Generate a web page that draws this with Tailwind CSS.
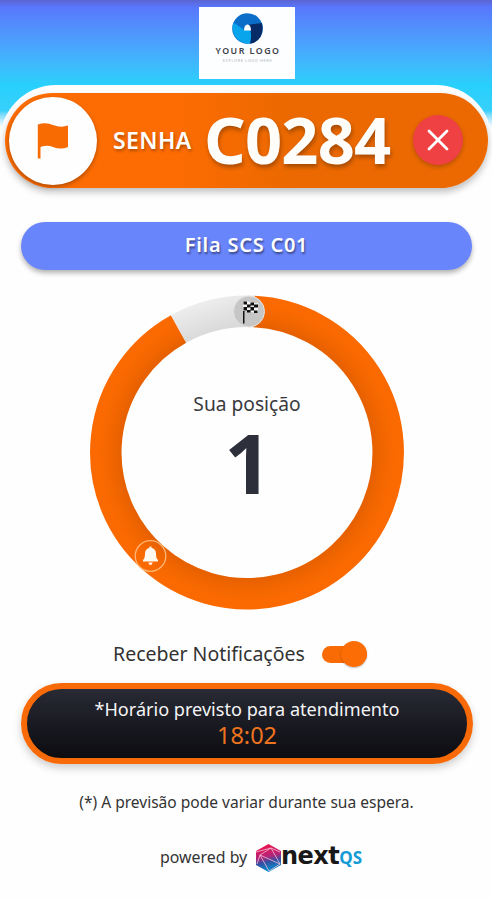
<!DOCTYPE html>
<html lang="pt-BR">
<head>
<meta charset="utf-8">
<title>Senha C0284</title>
<script src="https://cdn.jsdelivr.net/npm/@tailwindcss/browser@4"></script>
</head>
<body class="bg-[#fefefe]">
<main class="relative flex h-[900px] w-[492px] flex-col items-center overflow-hidden bg-[#fefefe] font-['Noto_Sans','Open_Sans',sans-serif] text-[#222]">
  <header class="flex h-[85px] w-full shrink-0 justify-center bg-linear-to-b from-[#5b64d0] via-[#5876fc] via-[8%] to-[#28d0fc] pt-[7px] pl-[2px]">
    <div class="flex h-[72px] w-[96px] flex-col items-center bg-[#fdfeff] pt-[6px]">
      <svg class="h-[31px] w-[31px]" viewBox="0 0 31 31">
        <circle cx="15.5" cy="15.5" r="15.3" fill="#0b6fca"/>
        <path d="M1.500 9.500C-2 21 6 31 18 30.600Q20 24 18 17H12Q8 14 1.500 9.500Z" fill="#08a4ec"/>
        <path d="M30 10Q33 28 18 30.800Q20 23 18.500 17L16 12Q22 11 30 10Z" fill="#062b67"/>
        <path d="M12 17.500Q12 12 15.500 11.500Q19 12 19 17.500Z" fill="#fff"/>
      </svg>
      <div class="mt-[1px] ml-[2px] text-[8.800px] leading-[12px] font-semibold tracking-[1.500px] whitespace-nowrap text-[#3d4148]">YOUR LOGO</div>
      <div class="mt-[1px] ml-[1px] text-[4px] leading-[6px] tracking-[0.55px] whitespace-nowrap text-[#b3b8bc]">EXPLORE LOGO HERE</div>
    </div>
  </header>

  <div class="w-full shrink-0 bg-linear-to-b from-[#28d0fc] from-0% via-[#36d0fb] via-[22%] to-[#fefefe] to-[36%]">
    <section class="h-[117px] rounded-[56px] bg-[#fefefe] pt-[8px] pr-[4px] pl-[5px]">
      <div class="flex h-[95px] items-center rounded-full bg-linear-to-r from-[#fc6c02] from-[35%] to-[#eb6900] to-[60%] pl-[4px] shadow-[0_4px_7px_rgba(0,0,0,0.25)]">
        <div class="flex h-[88px] w-[88px] shrink-0 items-center justify-center rounded-full bg-[#fffefe] shadow-[0_2px_4px_rgba(0,0,0,0.3)]">
          <svg class="h-[36px] w-[32px]" viewBox="0 0 32 36" fill="#f86a02"><path d="M0.800 1.500Q9-1 16 2Q24 5 31 2.500V24Q24 27 16 24Q10 21.500 3.500 24V35.500H0.800Z"/></svg>
        </div>
        <div class="mt-[-1px] ml-[16px] w-[91px] text-[23px] font-semibold tracking-[0.4px] text-white [text-shadow:1px_2px_3px_rgba(0,0,0,.3)]">SENHA</div>
        <div class="-mt-[3px] w-[209px] text-[65px] leading-[90px] font-bold tracking-[-0.8px] text-[#fffdfa] [text-shadow:1px_3px_4px_rgba(0,0,0,.3)]">C0284</div>
        <button class="-mt-px flex h-[50px] w-[50px] shrink-0 items-center justify-center rounded-full bg-[#ef4043] shadow-[0_2px_4px_rgba(0,0,0,0.22)]">
          <svg class="h-[24px] w-[24px]" viewBox="0 0 24 24" stroke="#fff" stroke-width="2.800" stroke-linecap="round"><path d="M3 3L21 21M21 3L3 21"/></svg>
        </button>
      </div>
    </section>
  </div>

  <div class="mt-[20px] ml-[1px] flex h-[48px] w-[451px] shrink-0 items-center justify-center rounded-full bg-[#6985fc] shadow-[0_3px_5px_rgba(0,0,0,0.3)]">
    <span class="-mt-[2px] text-[20px] font-semibold tracking-[0.75px] text-white [text-shadow:1px_2px_2px_rgba(0,0,0,.45)]">Fila SCS C01</span>
  </div>

  <section class="relative mt-[25px] ml-[2px] h-[316px] w-[316px] shrink-0">
    <svg class="absolute inset-0 h-full w-full" viewBox="89 295 316 316">
      <defs>
        <radialGradient id="o" gradientUnits="userSpaceOnUse" cx="247" cy="452.500" r="157">
          <stop offset=".8" stop-color="#e66000"/><stop offset=".87" stop-color="#f26600"/><stop offset=".95" stop-color="#fb6a01"/>
        </radialGradient>
        <linearGradient id="g" gradientUnits="userSpaceOnUse" x1="200" y1="300" x2="212" y2="334"><stop stop-color="#efefef"/><stop offset="1" stop-color="#d9d9d9"/></linearGradient>
      </defs>
      <path d="M254 311.500A141.200 141.200 0 1 1 178.600 329" fill="none" stroke="url(#o)" stroke-width="31.500"/>
      <path d="M178.600 329A141.200 141.200 0 0 1 254 311.500" fill="none" stroke="url(#g)" stroke-width="31.500"/>
      <circle cx="249" cy="311.500" r="15.500" fill="#c6c6c6" stroke="#e3e0dd"/>
      <path d="M243 302L246 301L256.500 303.500L258 302V312L255 313L245 310.500V311H243Z" fill="#f4f4f4"/>
      <path fill="#111" d="M243 311H244.500V323.500H243ZM243.500 301.500H247V304.500H243.500ZM250.500 302.500H254V305.500H250.500ZM247 304.500H250.500V307.500H247ZM254 304.500H258V307.500H254ZM243.500 307H247V310.500H243.500ZM250.500 307H254V310.500H250.500ZM247 310H250.500V312.500H247ZM254 310.500H257.500V313H254Z"/>
      <circle cx="150.500" cy="556" r="15.300" fill="none" stroke="#ffb675" stroke-width="1.300"/>
      <path d="M143 561.500V560Q145 558.500 145 553.500Q145.300 548.500 149.500 548V546.500H151.500V548Q155.700 548.500 156 553.500Q156 558.500 158 560V561.500ZM148.300 562.500H152.700Q152 565 150.500 565Q149 565 148.300 562.500Z" fill="#fff8f0"/>
    </svg>
    <div class="relative flex flex-col items-center pt-[94px]">
      <span class="text-[19.200px] leading-[30px] text-[#3a3a3e]">Sua posição</span>
      <strong class="mt-[1px] ml-[2px] text-[83px] leading-[84px] font-bold text-[#2d2f3b]">1</strong>
    </div>
  </section>

  <div class="mt-[28px] mr-[12px] flex h-[30px] w-[254px] shrink-0 items-center justify-between whitespace-nowrap">
    <span class="text-[19.500px] text-[#333]">Receber Notificações</span>
    <span class="flex h-[17px] w-[45px] shrink-0 items-center justify-end rounded-full bg-[#f96b04]"><span class="h-[26px] w-[26px] rounded-full bg-[#fc6d05] shadow-[0_1px_2px_rgba(0,0,0,0.25)]"></span></span>
  </div>

  <section class="mt-[14px] ml-[2px] flex h-[81px] w-[452px] shrink-0 flex-col items-center rounded-full border-[6px] border-[#f76a07] bg-linear-to-b from-[#2b2d38] to-[#0a0a0e] bg-origin-border pt-[7px] shadow-[0_4px_8px_rgba(0,0,0,0.2)]">
    <span class="text-[18.100px] leading-[26px] whitespace-nowrap text-[#f4f4f6]">*Horário previsto para atendimento</span>
    <span class="text-[23.500px] leading-[26px] text-[#ed731e]">18:02</span>
  </section>

  <p class="mt-[26px] ml-[1px] text-[15.550px] leading-[24px] whitespace-nowrap text-[#333]">(*) A previsão pode variar durante sua espera.</p>
  <footer class="mt-[28px] ml-[160px] flex h-[32px] w-[210px] items-center self-start whitespace-nowrap">
    <span class="w-[96px] text-[15.900px] text-[#333]">powered by</span>
    <svg class="h-[28px] w-[25px] shrink-0" viewBox="0 0 25 28">
      <defs><linearGradient id="h" x1=".3" y1="0" x2=".5" y2="1"><stop offset=".1" stop-color="#e91551"/><stop offset=".45" stop-color="#b62478"/><stop offset=".65" stop-color="#334fa3"/><stop offset="1" stop-color="#0098d5"/></linearGradient></defs>
      <path d="M12.500 0L25 7V21L12.500 28L0 21V7Z" fill="url(#h)"/>
      <path d="M0 8L15 4L24 20L4 11L13 27L24 20M15 4L4 11L1 20M15 4L24 8" fill="none" stroke="#f0bed8" stroke-width=".8"/>
    </svg>
    <span class="-mt-[4px] font-['DejaVu_Sans'] text-[24px] font-bold tracking-[-0.5px] text-[#181818]">next</span><span class="-mt-px font-['Noto_Sans'] text-[17px] font-bold text-[#129bd5]">QS</span>
  </footer>
</main>
</body>
</html>
